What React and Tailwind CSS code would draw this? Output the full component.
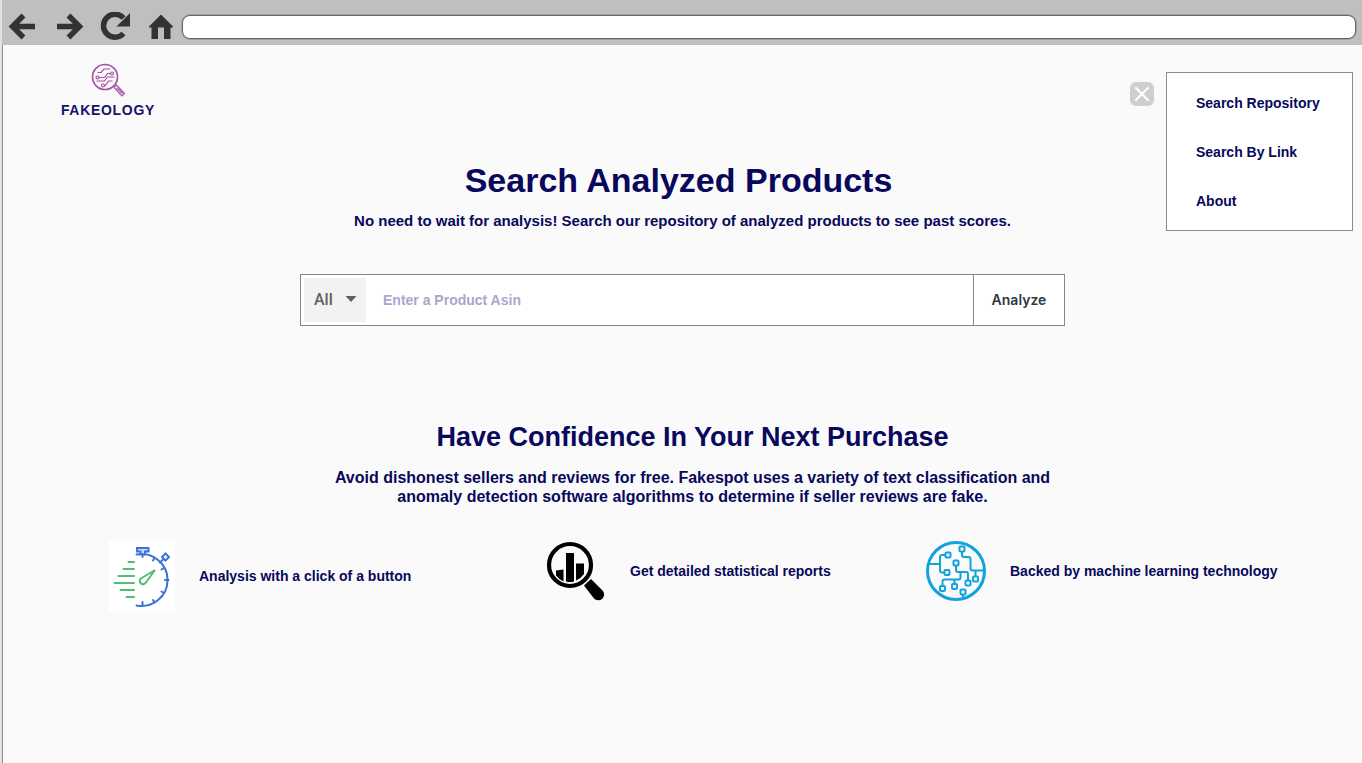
import React from "react";

function BackIcon() {
  return (
    <svg viewBox="0 0 28 28" className="size-7" fill="none" stroke="#333333" strokeWidth="5.500">
      <path d="M4 13.500H27M15.500 2.500L4.500 13.500L15.500 24.500" />
    </svg>
  );
}

function ForwardIcon() {
  return (
    <svg viewBox="0 0 28 28" className="size-7" fill="none" stroke="#333333" strokeWidth="5.500">
      <path d="M1 13.500H24M12.500 2.500L23.500 13.500L12.500 24.500" />
    </svg>
  );
}

function ReloadIcon() {
  return (
    <svg viewBox="0 0 32 30" className="h-[30px] w-8">
      <path d="M23.500 6A11.500 11.500 0 1 0 23.500 21.500" fill="none" stroke="#333333" strokeWidth="5.500" />
      <path d="M30 1V14.500H16.500Z" fill="#333333" />
    </svg>
  );
}

function HomeIcon() {
  return (
    <svg viewBox="0 0 26 28" className="h-7 w-[26px]" fill="#333333">
      <path d="M13 1.500L25 13.500V14.500H22.500V26H16V14.500H10V26H3.500V14.500H1V13.500Z" />
    </svg>
  );
}

function BrowserBar() {
  return (
    <header className="flex h-[45px] items-center bg-[#bfbfbf] pt-2 pr-1.5 pl-1.5">
      <button type="button" aria-label="Back"><BackIcon /></button>
      <button type="button" aria-label="Forward" className="ml-5"><ForwardIcon /></button>
      <button type="button" aria-label="Reload" className="ml-4"><ReloadIcon /></button>
      <button type="button" aria-label="Home" className="ml-4"><HomeIcon /></button>
      <input
        type="text"
        aria-label="Address"
        className="ml-2 h-6 min-w-0 flex-1 rounded-lg border border-[#666666] bg-white px-3 text-sm shadow-[0_0_0_1px_#a3a3a3] outline-none"
      />
    </header>
  );
}

function Logo() {
  return (
    <a href="#home" className="flex w-[108px] flex-col items-center gap-1">
      <svg viewBox="0 0 36 36" className="size-9" fill="none" stroke="#a44fa5" strokeWidth="1.200">
        <circle cx="15" cy="15" r="12.500" strokeWidth="1.600" />
        <path d="M24.500 24.500l2-1.500 8 8.500-2.500 2.500-7.500-8zM27 26l5.500 5.500" />
        <path d="M20 7h-6l-3 3.500H7.500M20.500 11.500h-3l-3 4H9M24.500 15h-7l-3 4H6.500M22.500 19h-4l-3 4.500h-1" />
        <circle cx="22" cy="11.500" r="1.500" />
        <circle cx="7.500" cy="15.500" r="1.500" />
        <circle cx="13" cy="23.500" r="1.500" />
      </svg>
      <span className="text-sm leading-4 font-bold tracking-wider text-[#17126b]">FAKEOLOGY</span>
    </a>
  );
}

function Menu() {
  return (
    <div className="absolute top-[27px] right-[9px] flex items-start gap-3">
      <button type="button" aria-label="Close menu" className="mt-[10px] flex size-6 items-center justify-center rounded-md bg-[#cfcfcf]">
        <svg viewBox="0 0 18 18" className="size-[18px]" fill="none" stroke="#ffffff" strokeWidth="2.200" strokeLinecap="round">
          <path d="M3 3L15 15M15 3L3 15" />
        </svg>
      </button>
      <nav className="flex w-[187px] flex-col gap-[29px] border border-[#8c8c8c] bg-white pt-5 pb-[19px] pl-[29px] text-sm leading-5 font-bold">
        <a href="#repository">Search Repository</a>
        <a href="#link">Search By Link</a>
        <a href="#about">About</a>
      </nav>
    </div>
  );
}

function SearchForm() {
  return (
    <form
      onSubmit={(event) => event.preventDefault()}
      className="mt-[41px] flex h-[52px] w-full max-w-[765px] border border-[#868686] bg-white"
    >
      <div className="relative m-[3px] w-[62px] bg-[#f2f2f2] font-[Roboto,sans-serif]">
        <select
          aria-label="Category"
          className="h-full w-full appearance-none bg-transparent pl-[10px] text-base font-medium text-[#5f5f5f] outline-none"
        >
          <option>All</option>
        </select>
        <svg viewBox="0 0 12 6" className="pointer-events-none absolute top-[18px] right-[9px] h-1.5 w-3" fill="#5f5f5f">
          <path d="M0.500 0H11.500L6 6Z" />
        </svg>
      </div>
      <input
        type="text"
        aria-label="Product Asin"
        placeholder="Enter a Product Asin"
        className="min-w-0 flex-1 bg-transparent px-[14px] text-sm font-bold outline-none placeholder:text-[#a9a7cb]"
      />
      <button type="submit" className="w-[91px] border-l border-[#868686] font-[Inter,sans-serif] text-sm font-semibold text-[#333740]">
        Analyze
      </button>
    </form>
  );
}

function StopwatchIcon() {
  return (
    <svg viewBox="0 0 66 70" className="h-[70px] w-[66px] shrink-0 bg-white" fill="none" strokeWidth="2" strokeLinecap="round">
      <g stroke="#3b73d9">
        <path d="M27.500 13.500A26 26 0 1 1 27.500 64.500" />
        <path d="M28 7h11.500v3.500h-3.500v3h-4.500v-3H28z" fill="#c9daf7" />
        <path d="M33.500 13v3" />
        <path d="M56.500 12.500l3.500 3.500-3.500 3.500-3.500-3.500zM54 18.500l-3 3" />
        <path d="M33.500 61v3.500M45.500 17l-1.500 2.500M55 27l-2.500 1.500M59.500 39H56M55 52l-2.500-1.500M45.500 61.500L44 59" />
      </g>
      <g stroke="#52bd78">
        <path d="M19.500 21h5.500M14.500 28h10.500M9.500 35h15.500M5.500 42h19.500M11.500 49h13.500M17.500 56h7.500" />
        <path d="M46 29L36.500 42a3.200 3.200 0 1 1-4.500-4.500z" />
      </g>
    </svg>
  );
}

function ReportIcon() {
  return (
    <svg viewBox="0 0 60 60" className="size-[60px] shrink-0">
      <circle cx="24" cy="24" r="21" fill="none" stroke="#000" strokeWidth="4.200" />
      <path d="M10 29.500l7.500-1v12q-4-1.500-7.500-6zM20 12h8v28.500q-4 1-8 0zM30 22.500h8V33q-3 4.500-8 6.500z" fill="#000" />
      <path d="M38 44.500L45 38 56.500 49.500a5.800 5.800 0 0 1-8.500 8z" fill="#000" />
    </svg>
  );
}

const circuitNodes = [
  [22, 14], [21, 31.5], [36, 8], [30, 22], [16.5, 47.5], [28.5, 45.5], [42, 42], [49.5, 38], [37, 51],
];

function CircuitIcon() {
  return (
    <svg viewBox="0 0 60 60" className="size-[60px] shrink-0" fill="none" stroke="#12a3dc" strokeWidth="2">
      <circle cx="30" cy="30" r="28.500" strokeWidth="3" />
      <path d="M2 23h12M19.500 14H16q-2 0-2 2v13.500q0 2 2 2h2.500" />
      <path d="M36 10.500V14q0 2 2 2h4.500q2 0 2 2v9.500q0 2 2 2H58M49.500 29.500v6" />
      <path d="M30 24.500V29q0 2 2 2h8q2 0 2 2v6.500M34.500 31v5q0 2.500-2 2.500h-14q-2 0-2 2V45M28.500 38.500V43" />
      <path d="M37 53.500V58" />
      {circuitNodes.map(([cx, cy]) => (
        <rect key={`${cx}-${cy}`} x={cx - 2.5} y={cy - 2.5} width="5" height="5" rx="1" />
      ))}
    </svg>
  );
}

function Feature({ icon, children }) {
  return (
    <li className="flex items-center gap-6 whitespace-nowrap">
      {icon}
      <span>{children}</span>
    </li>
  );
}

export default function App() {
  return (
    <div className="flex min-h-screen flex-col border-l-2 border-[#e2e2e4] bg-[#fafafa] font-['Arial_Rounded_MT_Bold','Liberation_Sans',sans-serif] text-[#08085c]">
      <BrowserBar />
      <main className="relative flex-1 border-l border-[#8c8c8c] pt-[17px]">
        <div className="ml-[51px]">
          <Logo />
        </div>
        <Menu />
        <section className="mt-[42px] flex flex-col items-center">
          <h1 className="pr-2 text-[34px] leading-10 font-bold">Search Analyzed Products</h1>
          <p className="mt-[9px] text-[15px] leading-6 font-bold">
            No need to wait for analysis! Search our repository of analyzed products to see past scores.
          </p>
          <SearchForm />
        </section>
        <section className="mt-[93px] pl-5 text-center">
          <h2 className="text-[27px] leading-9 font-bold">Have Confidence In Your Next Purchase</h2>
          <p className="mt-[13px] text-base leading-[19px] font-bold">
            Avoid dishonest sellers and reviews for free. Fakespot uses a variety of text classification and
            <br />
            anomaly detection software algorithms to determine if seller reviews are fake.
          </p>
        </section>
        <ul className="mt-[35px] mr-[73px] ml-[106px] grid grid-cols-[437fr_380fr_363fr] items-start text-sm font-bold">
          <Feature icon={<StopwatchIcon />}>Analysis with a click of a button</Feature>
          <Feature icon={<ReportIcon />}>Get detailed statistical reports</Feature>
          <Feature icon={<CircuitIcon />}>Backed by machine learning technology</Feature>
        </ul>
      </main>
    </div>
  );
}
